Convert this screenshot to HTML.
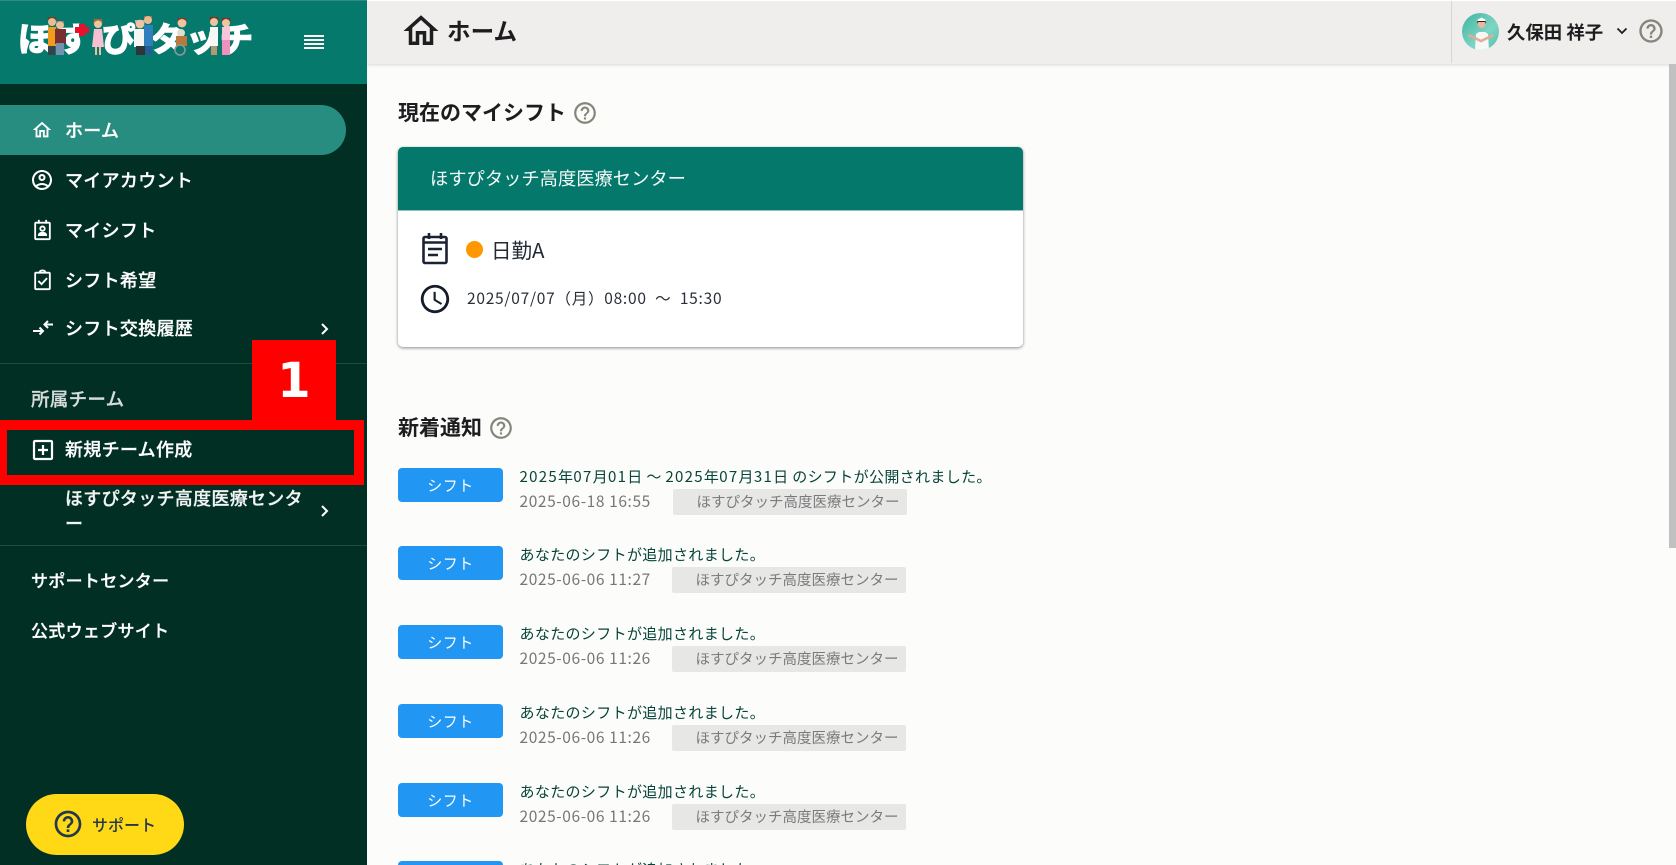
<!DOCTYPE html>
<html lang="ja"><head><meta charset="utf-8"><title>ホーム</title>
<style>
*{box-sizing:border-box;margin:0;padding:0}
html,body{width:1676px;height:865px;overflow:hidden;background:#fcfcfa;font-family:"Liberation Sans","Noto Sans CJK JP",sans-serif}
#root{position:relative;width:1676px;height:865px;overflow:hidden;background:#fcfcfa}
.a{position:absolute;white-space:nowrap;line-height:1}
svg{position:absolute;display:block}
.side{position:absolute;left:0;top:0;width:367px;height:865px;background:#022f24}
.top{position:absolute;left:0;top:0;width:367px;height:84px;background:#04796c;border-top:1px solid #2c8d80}
.m{color:#fff;font-size:18px;font-weight:500;left:65px;letter-spacing:.3px;font-family:"Noto Sans CJK JP",sans-serif;-webkit-text-stroke:.25px currentColor}
.m2{left:31px}
.btn{position:absolute;left:398px;width:105px;height:34px;background:#2196f3;border-radius:4px;color:#fff;font-size:15px;text-align:center;line-height:35px;font-family:"Noto Sans CJK JP",sans-serif;letter-spacing:.5px}
.t{left:519.5px;font-size:15px;color:#07443a;font-family:"Noto Sans CJK JP",sans-serif;letter-spacing:.35px}
.t b{font-weight:400;letter-spacing:1.3px}
.d{left:519.5px;font-size:15.5px;color:#77777a;font-family:"Noto Sans CJK JP",sans-serif;letter-spacing:.6px}
.c{position:absolute;left:672px;width:234px;height:26px;background:#e7e7e6;border-radius:2px;color:#7b7b7d;font-size:14.5px;line-height:25px;padding-left:23.5px;font-family:"Noto Sans CJK JP",sans-serif;white-space:nowrap}
.h{font-size:21px;font-weight:700;color:#1d1d20;left:398px;font-family:"Noto Sans CJK JP",sans-serif}
.lg{position:absolute;top:21px;font-size:33px;line-height:1;font-weight:700;color:#fff;font-family:"Noto Sans CJK JP",sans-serif;-webkit-text-stroke:1.6px #fff}
</style></head><body><div id="root">

<div class="a" style="left:367px;top:0;width:1309px;height:64px;background:#efeeec;border-top:1px solid #fff;box-shadow:0 1px 3px rgba(0,0,0,.15)"></div>
<div class="a" style="left:1451px;top:1px;width:1px;height:62px;background:#d8d7d5"></div>
<svg style="left:400px;top:10px" width="42" height="42" viewBox="0 0 24 24" fill="#1e1e20"><path d="M12 5.69l5 4.5V18h-2v-6H9v6H7v-7.81l5-4.5M12 3L2 12h3v8h6v-6h2v6h6v-8h3L12 3z"/></svg>
<div class="a" style="left:447px;top:19px;font-size:23.6px;font-weight:700;color:#1d1d20;font-family:'Noto Sans CJK JP',sans-serif">ホーム</div>

<svg style="left:1462px;top:13px" width="37" height="37" viewBox="0 0 37 37">
<defs><clipPath id="av"><circle cx="18.5" cy="18.5" r="18.500"/></clipPath><linearGradient id="ag" x1="0" y1="0" x2="1" y2="1"><stop offset="0" stop-color="#3fb3a0"/><stop offset=".6" stop-color="#7fd5c4"/><stop offset="1" stop-color="#55c0ae"/></linearGradient></defs>
<g clip-path="url(#av)"><rect width="37" height="37" fill="url(#ag)"/>
<path d="M13 37l1-16 3-2h6l3 2 1 16z" fill="#f6f8f8"/>
<path d="M6.500 22l12.500 6 12.500-6" fill="none" stroke="#e2ad92" stroke-width="2.600"/>
<circle cx="19.500" cy="11" r="4" fill="#e8b79e"/><path d="M15 11q-.5-4.500 4.500-4.500t4.500 4.500l-1-2h-7z" fill="#2a2320"/><path d="M15 7l4.500-2.500L24 7l-1 1h-7z" fill="#fff"/></g></svg>
<div class="a" style="left:1507px;top:23px;font-size:18.4px;font-weight:700;color:#1d1d20;font-family:'Noto Sans CJK JP',sans-serif">久保田 祥子</div>
<svg style="left:1614px;top:23px" width="16" height="16" viewBox="0 0 16 16" fill="none" stroke="#1d1d20" stroke-width="1.800"><path d="M3.500 5.500l4.500 4.500 4.500-4.500"/></svg>
<svg style="left:1637px;top:17px" width="28" height="28" viewBox="0 0 24 24" fill="#85867a"><path d="M11 18h2v-2h-2v2zm1-16C6.48 2 2 6.48 2 12s4.48 10 10 10 10-4.48 10-10S17.52 2 12 2zm0 18c-4.41 0-8-3.59-8-8s3.59-8 8-8 8 3.59 8 8-3.59 8-8 8zm0-14c-2.21 0-4 1.79-4 4h2c0-1.1.9-2 2-2s2 .9 2 2c0 2-3 1.75-3 5h2c0-2.25 3-2.5 3-5 0-2.21-1.79-4-4-4z"/></svg>
<div class="a" style="left:1669px;top:64px;width:7px;height:484px;background:#c1c1c1"></div>

<div class="a h" style="top:102px">現在のマイシフト</div>
<svg style="left:572px;top:100px" width="26" height="26" viewBox="0 0 24 24" fill="#85867a"><path d="M11 18h2v-2h-2v2zm1-16C6.48 2 2 6.48 2 12s4.48 10 10 10 10-4.48 10-10S17.52 2 12 2zm0 18c-4.41 0-8-3.59-8-8s3.59-8 8-8 8 3.59 8 8-3.59 8-8 8zm0-14c-2.21 0-4 1.79-4 4h2c0-1.1.9-2 2-2s2 .9 2 2c0 2-3 1.75-3 5h2c0-2.25 3-2.5 3-5 0-2.21-1.79-4-4-4z"/></svg>

<div class="a" style="left:398px;top:147px;width:625px;height:200px;background:#fff;border-radius:5px;box-shadow:0 1px 3px rgba(0,0,0,.45)"></div>
<div class="a" style="left:398px;top:147px;width:625px;height:64px;background:#04786b;border-radius:5px 5px 0 0;border-bottom:1px solid #8cc4bd"></div>
<div class="a" style="left:430px;top:169px;font-size:18.3px;color:#f4fbfa;font-family:'Noto Sans CJK JP',sans-serif">ほすぴタッチ高度医療センター</div>
<svg style="left:417px;top:231px" width="36" height="36" viewBox="0 0 36 36" fill="none" stroke="#1b2233" stroke-width="2.600"><rect x="6.500" y="6" width="23" height="26" rx="1.500"/><path d="M12 2v6M24 2v6M6.500 11.500h23" /><path d="M11 18h14M11 24h10"/></svg>
<div class="a" style="left:466px;top:241px;width:17px;height:17px;border-radius:50%;background:#ff9800"></div>
<div class="a" style="left:491px;top:239px;font-size:20.5px;color:#222a33;font-family:'Noto Sans CJK JP',sans-serif">日勤A</div>
<svg style="left:418px;top:282px" width="34" height="34" viewBox="0 0 24 24" fill="#141c2c"><path d="M11.99 2C6.47 2 2 6.48 2 12s4.47 10 9.99 10C17.52 22 22 17.52 22 12S17.52 2 11.99 2zM12 20c-4.42 0-8-3.58-8-8s3.58-8 8-8 8 3.58 8 8-3.58 8-8 8zm.5-13H11v6l5.25 3.15.75-1.23-4.5-2.67z"/></svg>
<div class="a" style="left:467px;top:291px;font-size:15.5px;letter-spacing:.75px;color:#2a3038;font-family:'Noto Sans CJK JP',sans-serif;white-space:pre">2025/07/07（月）08:00  ～  15:30</div>

<div class="a h" style="top:417px">新着通知</div>
<svg style="left:488px;top:415px" width="26" height="26" viewBox="0 0 24 24" fill="#85867a"><path d="M11 18h2v-2h-2v2zm1-16C6.48 2 2 6.48 2 12s4.48 10 10 10 10-4.48 10-10S17.52 2 12 2zm0 18c-4.41 0-8-3.59-8-8s3.59-8 8-8 8 3.59 8 8-3.59 8-8 8zm0-14c-2.21 0-4 1.79-4 4h2c0-1.1.9-2 2-2s2 .9 2 2c0 2-3 1.75-3 5h2c0-2.25 3-2.5 3-5 0-2.21-1.79-4-4-4z"/></svg>

<div class="btn" style="top:468px">シフト</div>
<div class="a t" style="top:469px"><b>2025</b>年<b>07</b>月<b>01</b>日 ～ <b>2025</b>年<b>07</b>月<b>31</b>日 のシフトが公開されました。</div>
<div class="a d" style="top:494px">2025-06-18 16:55</div>
<div class="c" style="top:489px;left:673px">ほすぴタッチ高度医療センター</div>

<div class="btn" style="top:546px">シフト</div>
<div class="a t" style="top:547px">あなたのシフトが追加されました。</div>
<div class="a d" style="top:572px">2025-06-06 11:27</div>
<div class="c" style="top:567px">ほすぴタッチ高度医療センター</div>

<div class="btn" style="top:625px">シフト</div>
<div class="a t" style="top:626px">あなたのシフトが追加されました。</div>
<div class="a d" style="top:651px">2025-06-06 11:26</div>
<div class="c" style="top:646px">ほすぴタッチ高度医療センター</div>

<div class="btn" style="top:704px">シフト</div>
<div class="a t" style="top:705px">あなたのシフトが追加されました。</div>
<div class="a d" style="top:730px">2025-06-06 11:26</div>
<div class="c" style="top:725px">ほすぴタッチ高度医療センター</div>

<div class="btn" style="top:783px">シフト</div>
<div class="a t" style="top:784px">あなたのシフトが追加されました。</div>
<div class="a d" style="top:809px">2025-06-06 11:26</div>
<div class="c" style="top:804px">ほすぴタッチ高度医療センター</div>

<div class="btn" style="top:861px">シフト</div>
<div class="a t" style="top:862px">あなたのシフトが追加されました。</div>

<div class="side"></div>
<div class="top"></div>

<!-- logo -->
<div class="lg" style="left:18px">ほ</div>
<div class="lg" style="left:57px">す</div>
<div class="lg" style="left:102px">ぴ</div>
<div class="lg" style="left:150px">タ</div>
<div class="lg" style="left:186px">ッ</div>
<div class="lg" style="left:220px">チ</div>
<svg style="left:0;top:0" width="270" height="60" viewBox="0 0 270 60">
<rect x="75" y="27" width="14" height="6" fill="#e8102a"/><rect x="79" y="24" width="6" height="12" fill="#e8102a"/>
<g><circle cx="52" cy="22" r="4" fill="#e9bc97"/><path d="M47 21q5-6 10 0l-1-4h-8z" fill="#6e4222"/><rect x="48" y="27" width="8" height="19" fill="#f29b1c"/><rect x="48" y="46" width="7" height="9" fill="#39424a"/></g>
<g><circle cx="60" cy="25" r="4" fill="#e8c19e"/><path d="M56 24q4-5 8 0v-3h-8z" fill="#8a8078"/><rect x="55" y="29" width="11" height="15" fill="#75302f"/><rect x="56" y="43" width="8" height="12" fill="#7392ad"/></g>
<g><circle cx="98" cy="24" r="4" fill="#edc5a3"/><path d="M93 24q5-7 10 0l-1-5h-8z" fill="#a56a32"/><path d="M94 29h8l2 18h-12z" fill="#f6bfd2"/><rect x="95" y="47" width="2" height="8" fill="#e9c2a2"/><rect x="99" y="47" width="2" height="8" fill="#e9c2a2"/></g>
<g><circle cx="140" cy="24" r="4.400" fill="#edc5a3"/><path d="M135 23q5-6 10 0v-3h-10z" fill="#b9b3ac"/><rect x="134" y="29" width="13" height="18" fill="#f6f6f4"/><rect x="136" y="46" width="9" height="9" fill="#2f3438"/></g>
<g><circle cx="148" cy="20" r="4" fill="#e9bb94"/><path d="M144 18q4-4 8 0v-2h-8z" fill="#b36f22"/><rect x="144" y="25" width="9" height="21" fill="#2f7fbd"/><rect x="145" y="46" width="7" height="9" fill="#1f5f93"/></g>
<g><circle cx="182" cy="23" r="4.400" fill="#edc5a3"/><path d="M177 22q5-6 10 0l-1-4h-8z" fill="#8a3a20"/><circle cx="181" cy="33" r="4" fill="#e3dcd5"/><rect x="176" y="36" width="11" height="10" fill="#b77a3c"/><circle cx="180" cy="50" r="5" fill="none" stroke="#8e959a" stroke-width="1.600"/></g>
<g><circle cx="214" cy="22" r="4" fill="#edc5a3"/><path d="M209 21q5-6 10 0l-1-4h-8z" fill="#8a2f1d"/><rect x="210" y="27" width="8" height="19" fill="#f7f7f5"/><rect x="211" y="46" width="6" height="9" fill="#b49872"/></g>
<g><circle cx="226" cy="23" r="4" fill="#edc5a3"/><path d="M221 22q5-6 10 0l-1-4h-8z" fill="#8a2f1d"/><rect x="222" y="27" width="8" height="13" fill="#f9c6d9"/><rect x="222" y="40" width="8" height="15" fill="#ee92bd"/></g>
</svg>
<svg style="left:304px;top:33px" width="20" height="18" viewBox="0 0 20 18" fill="#fff"><rect y="2" width="20" height="2"/><rect y="6" width="20" height="2"/><rect y="10" width="20" height="2"/><rect y="14" width="20" height="2"/></svg>

<!-- nav -->
<div class="a" style="left:0;top:105px;width:346px;height:50px;background:#288d81;border-radius:0 25px 25px 0"></div>
<svg style="left:31px;top:119px" width="22" height="22" viewBox="0 0 24 24" fill="#fff"><path d="M12 5.69l5 4.5V18h-2v-6H9v6H7v-7.81l5-4.5M12 3L2 12h3v8h6v-6h2v6h6v-8h3L12 3z"/></svg>
<div class="a m" style="top:121px">ホーム</div>

<svg style="left:30px;top:168px" width="24" height="24" viewBox="0 0 24 24" fill="#fff"><path d="M12 2C6.48 2 2 6.48 2 12s4.48 10 10 10 10-4.48 10-10S17.52 2 12 2zM7.35 18.5C8.66 17.56 10.26 17 12 17s3.34.56 4.65 1.5c-1.31.94-2.91 1.5-4.65 1.5s-3.34-.56-4.65-1.5zm10.79-1.38C16.45 15.8 14.32 15 12 15s-4.45.8-6.14 2.12C4.7 15.73 4 13.95 4 12c0-4.42 3.58-8 8-8s8 3.58 8 8c0 1.95-.7 3.73-1.86 5.12zM12 6c-1.93 0-3.5 1.57-3.5 3.5S10.07 13 12 13s3.5-1.57 3.5-3.5S13.93 6 12 6zm0 5c-.83 0-1.5-.67-1.5-1.5S11.17 8 12 8s1.5.67 1.5 1.5S12.83 11 12 11z"/></svg>
<div class="a m" style="top:171px">マイアカウント</div>

<svg style="left:32.500px;top:219px" width="19" height="22" viewBox="0 0 20 24" fill="none" stroke="#fff" stroke-width="2"><rect x="2" y="4" width="16" height="18" rx="1"/><path d="M6 1v4M14 1v4"/><circle cx="10" cy="10.500" r="2.400"/><path d="M5.500 18q0-3.500 4.500-3.500t4.500 3.500z" fill="#fff" stroke-width="1"/></svg>
<div class="a m" style="top:221px">マイシフト</div>

<svg style="left:32.500px;top:269px" width="19" height="22" viewBox="0 0 20 24" fill="none" stroke="#fff" stroke-width="2"><rect x="2" y="4" width="16" height="18" rx="1"/><path d="M7 4q0-2.500 3-2.500t3 2.500M5.500 13l3.500 3.500 6-6.500"/></svg>
<div class="a m" style="top:271px">シフト希望</div>

<svg style="left:32px;top:318px" width="22" height="20" viewBox="0 0 22 20" fill="none" stroke="#fff" stroke-width="2"><path d="M21 6.500H13M16 3l-3.500 3.500L16 10M1 13h9M7.500 9.500L11 13l-3.500 3.500"/></svg>
<div class="a m" style="top:319px">シフト交換履歴</div>
<svg style="left:318px;top:320px" width="14" height="18" viewBox="0 0 14 18" fill="none" stroke="#fff" stroke-width="2"><path d="M4 4l5 5-5 5"/></svg>

<div class="a" style="left:0;top:363px;width:367px;height:1px;background:#1f4a40"></div>
<div class="a m m2" style="top:390px;color:#d5dcd9;font-size:18.5px">所属チーム</div>

<div class="a" style="left:0;top:420px;width:364px;height:65px;border:solid #f00;border-width:10px 10px 10px 7px"></div>
<div class="a" style="left:252px;top:340px;width:84px;height:82px;background:#f00"></div>
<div class="a" style="left:252px;top:357px;width:84px;text-align:center;font-size:48px;font-weight:700;color:#fff;font-family:'DejaVu Sans',sans-serif">1</div>
<svg style="left:31.500px;top:439px" width="22" height="22" viewBox="0 0 22 22" fill="none" stroke="#fff" stroke-width="2.200"><rect x="2" y="2" width="18" height="18" rx="1"/><path d="M11 6v10M6 11h10"/></svg>
<div class="a m" style="top:440px">新規チーム作成</div>

<div class="a m" style="top:489px;color:#f1f4f3">ほすぴタッチ高度医療センタ</div>
<div class="a m" style="top:514px;color:#f1f4f3">ー</div>
<svg style="left:318px;top:502px" width="14" height="18" viewBox="0 0 14 18" fill="none" stroke="#fff" stroke-width="2"><path d="M4 4l5 5-5 5"/></svg>
<div class="a" style="left:0;top:545px;width:367px;height:1px;background:#1f4a40"></div>
<div class="a m m2" style="top:571px;font-size:17px">サポートセンター</div>
<div class="a m m2" style="top:621px;font-size:17px">公式ウェブサイト</div>

<div class="a" style="left:26px;top:794px;width:158px;height:61px;background:#ffd816;border-radius:31px"></div>
<svg style="left:52px;top:808px" width="32" height="32" viewBox="0 0 24 24" fill="#24384c"><path d="M11 18h2v-2h-2v2zm1-16C6.48 2 2 6.48 2 12s4.48 10 10 10 10-4.48 10-10S17.52 2 12 2zm0 18c-4.41 0-8-3.59-8-8s3.59-8 8-8 8 3.59 8 8-3.59 8-8 8zm0-14c-2.21 0-4 1.790-4 4h2c0-1.1.9-2 2-2s2 .9 2 2c0 2-3 1.750-3 5h2c0-2.250 3-2.500 3-5 0-2.210-1.790-4-4-4z"/></svg>
<div class="a" style="left:92px;top:816px;font-size:16px;font-weight:500;color:#24384c;font-family:'Noto Sans CJK JP',sans-serif">サポート</div>

</div></body></html>
